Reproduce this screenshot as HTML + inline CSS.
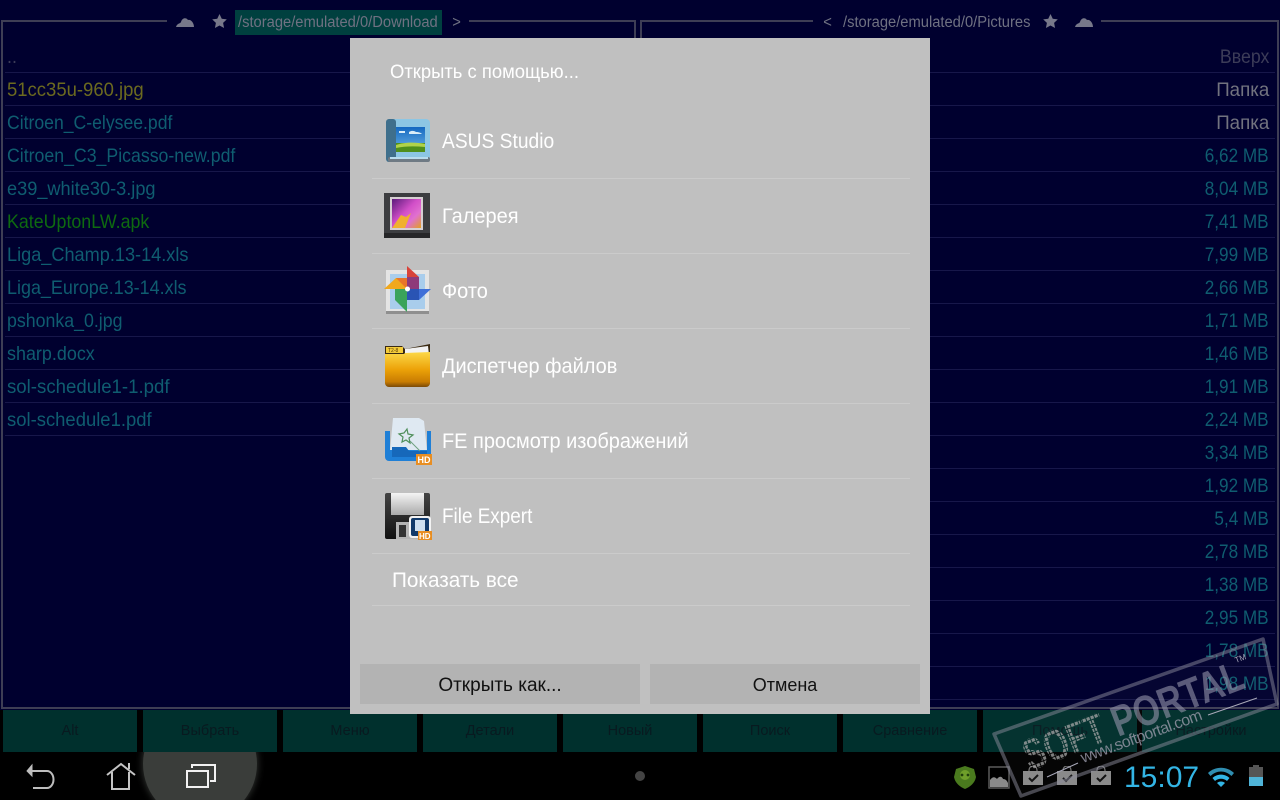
<!DOCTYPE html>
<html><head><meta charset="utf-8"><style>
html,body{margin:0;padding:0;background:#000}
#s{position:relative;width:1280px;height:800px;overflow:hidden;background:#000;font-family:"Liberation Sans",sans-serif}
#s div,#s span{position:absolute;white-space:nowrap}
.panel{background:#00002f}
.ln{background:#3e3e55}
.sep{height:1px;background:#17174a}
.l{left:7px;font-size:19.5px;line-height:22px;color:#0f5d70;transform-origin:0 50%;transform:scaleX(.92)}
.r{right:11px;font-size:19.5px;line-height:22px;color:#0f5d70;transform-origin:100% 50%;transform:scaleX(.88)}
.p{font-size:15.5px;line-height:20px;color:#6f7182;transform:scaleX(.95)}
.b{top:710px;height:42px;background:#00302d;color:#081a20;font-size:14.5px;line-height:43px;text-align:center}
.it{left:442px;font-size:21px;line-height:26px;color:#fff;transform-origin:0 50%;transform:scaleX(.95)}
.dv{left:372px;width:538px;height:1px;background:#cbcbcb}
.db{top:664px;height:40px;background:#b3b3b3;color:#111;line-height:42px;text-align:center}
</style></head><body><div id="s">
<div class="panel" style="left:0;top:0;width:1280px;height:710px"></div>
<div class="ln" style="left:2px;top:20px;width:165px;height:2px"></div>
<div class="ln" style="left:469px;top:20px;width:167px;height:2px"></div>
<div class="ln" style="left:642px;top:20px;width:171px;height:2px"></div>
<div class="ln" style="left:1101px;top:20px;width:176px;height:2px"></div>
<div class="ln" style="left:1px;top:20px;width:2px;height:689px"></div>
<div class="ln" style="left:634px;top:20px;width:2px;height:689px"></div>
<div class="ln" style="left:640px;top:20px;width:2px;height:689px"></div>
<div class="ln" style="left:1277px;top:20px;width:2px;height:689px"></div>
<div class="ln" style="left:1px;top:707px;width:635px;height:2px"></div>
<div class="ln" style="left:640px;top:707px;width:639px;height:2px"></div>

<svg style="position:absolute;left:176px;top:15px" width="18" height="13" viewBox="0 0 18 13"><path d="M0 12C1 8 4 9 5 7 6 3 10 2 12 5 15 4 18 8 18 12Z" fill="#77788a"/></svg>
<svg style="position:absolute;left:212px;top:14px" width="15" height="14" viewBox="0 0 24 23"><path d="M12 0l3.700 7.800 8.300 1-6.100 5.800 1.600 8.400L12 18.900 4.500 23l1.600-8.400L0 8.800l8.300-1z" fill="#77788a"/></svg>
<div style="left:235px;top:10px;width:207px;height:25px;background:#00403f"></div>
<span class="p" style="left:238px;top:13px;transform-origin:0 50%">/storage/emulated/0/Download</span>
<span class="p" style="left:452px;top:13px">&gt;</span>
<span class="p" style="left:823px;top:13px">&lt;</span>
<span class="p" style="left:843px;top:13px;transform-origin:0 50%">/storage/emulated/0/Pictures</span>
<svg style="position:absolute;left:1043px;top:14px" width="15" height="14" viewBox="0 0 24 23"><path d="M12 0l3.700 7.800 8.300 1-6.100 5.800 1.600 8.400L12 18.900 4.500 23l1.600-8.400L0 8.800l8.300-1z" fill="#77788a"/></svg>
<svg style="position:absolute;left:1075px;top:15px" width="18" height="13" viewBox="0 0 18 13"><path d="M0 12C1 8 4 9 5 7 6 3 10 2 12 5 15 4 18 8 18 12Z" fill="#77788a"/></svg>

<div class="sep" style="left:5px;width:630px;top:72px"></div><div class="sep" style="left:5px;width:630px;top:105px"></div><div class="sep" style="left:5px;width:630px;top:138px"></div><div class="sep" style="left:5px;width:630px;top:171px"></div><div class="sep" style="left:5px;width:630px;top:204px"></div><div class="sep" style="left:5px;width:630px;top:237px"></div><div class="sep" style="left:5px;width:630px;top:270px"></div><div class="sep" style="left:5px;width:630px;top:303px"></div><div class="sep" style="left:5px;width:630px;top:336px"></div><div class="sep" style="left:5px;width:630px;top:369px"></div><div class="sep" style="left:5px;width:630px;top:402px"></div><div class="sep" style="left:5px;width:630px;top:435px"></div>

<div class="sep" style="left:930px;width:345px;top:72px"></div><div class="sep" style="left:930px;width:345px;top:105px"></div><div class="sep" style="left:930px;width:345px;top:138px"></div><div class="sep" style="left:930px;width:345px;top:171px"></div><div class="sep" style="left:930px;width:345px;top:204px"></div><div class="sep" style="left:930px;width:345px;top:237px"></div><div class="sep" style="left:930px;width:345px;top:270px"></div><div class="sep" style="left:930px;width:345px;top:303px"></div><div class="sep" style="left:930px;width:345px;top:336px"></div><div class="sep" style="left:930px;width:345px;top:369px"></div><div class="sep" style="left:930px;width:345px;top:402px"></div><div class="sep" style="left:930px;width:345px;top:435px"></div><div class="sep" style="left:930px;width:345px;top:468px"></div><div class="sep" style="left:930px;width:345px;top:501px"></div><div class="sep" style="left:930px;width:345px;top:534px"></div><div class="sep" style="left:930px;width:345px;top:567px"></div><div class="sep" style="left:930px;width:345px;top:600px"></div><div class="sep" style="left:930px;width:345px;top:633px"></div><div class="sep" style="left:930px;width:345px;top:666px"></div><div class="sep" style="left:930px;width:345px;top:699px"></div>

<span class="l" style="top:46px;color:#3c3c58">..</span>
<span class="l" style="top:79px;color:#6c6a1f;transform:scaleX(.948)">51cc35u-960.jpg</span>
<span class="l" style="top:112px;transform:scaleX(.903)">Citroen_C-elysee.pdf</span>
<span class="l" style="top:145px;transform:scaleX(.908)">Citroen_C3_Picasso-new.pdf</span>
<span class="l" style="top:178px;transform:scaleX(.932)">e39_white30-3.jpg</span>
<span class="l" style="top:211px;color:#0e6a10;transform:scaleX(.914)">KateUptonLW.apk</span>
<span class="l" style="top:244px;transform:scaleX(.93)">Liga_Champ.13-14.xls</span>
<span class="l" style="top:277px;transform:scaleX(.92)">Liga_Europe.13-14.xls</span>
<span class="l" style="top:310px;transform:scaleX(.91)">pshonka_0.jpg</span>
<span class="l" style="top:343px">sharp.docx</span>
<span class="l" style="top:376px;transform:scaleX(.955)">sol-schedule1-1.pdf</span>
<span class="l" style="top:409px;transform:scaleX(.946)">sol-schedule1.pdf</span>

<span class="r" style="top:46px;color:#3c3c58;transform:scaleX(.91)">Вверх</span>
<span class="r" style="top:79px;color:#72737f;transform:scaleX(.96)">Папка</span>
<span class="r" style="top:112px;color:#72737f;transform:scaleX(.96)">Папка</span>
<span class="r" style="top:145px">6,62 MB</span>
<span class="r" style="top:178px">8,04 MB</span>
<span class="r" style="top:211px">7,41 MB</span>
<span class="r" style="top:244px">7,99 MB</span>
<span class="r" style="top:277px">2,66 MB</span>
<span class="r" style="top:310px">1,71 MB</span>
<span class="r" style="top:343px">1,46 MB</span>
<span class="r" style="top:376px">1,91 MB</span>
<span class="r" style="top:409px">2,24 MB</span>
<span class="r" style="top:442px">3,34 MB</span>
<span class="r" style="top:475px">1,92 MB</span>
<span class="r" style="top:508px">5,4 MB</span>
<span class="r" style="top:541px">2,78 MB</span>
<span class="r" style="top:574px">1,38 MB</span>
<span class="r" style="top:607px">2,95 MB</span>
<span class="r" style="top:640px">1,78 MB</span>
<span class="r" style="top:673px">1,98 MB</span>

<div class="b" style="left:3px;width:134px">Alt</div>
<div class="b" style="left:143px;width:134px">Выбрать</div>
<div class="b" style="left:283px;width:134px">Меню</div>
<div class="b" style="left:423px;width:134px">Детали</div>
<div class="b" style="left:563px;width:134px">Новый</div>
<div class="b" style="left:703px;width:134px">Поиск</div>
<div class="b" style="left:843px;width:134px">Сравнение</div>
<div class="b" style="left:983px;width:154px">Помощь</div>
<div class="b" style="left:1142px;width:138px">Настройки</div>

<!-- dialog -->
<div style="left:350px;top:38px;width:580px;height:676px;background:#c0c0c0"></div>
<span style="left:390px;top:61px;font-size:19px;line-height:24px;color:#fff;transform-origin:0 50%;transform:scaleX(.97)">Открыть с помощью...</span>

<svg style="position:absolute;left:385px;top:118px" width="46" height="46" viewBox="0 0 46 46">
<defs><linearGradient id="sky" x1="0" y1="0" x2="0" y2="1"><stop offset="0" stop-color="#1468c0"/><stop offset="1" stop-color="#6cb4e8"/></linearGradient></defs>
<rect x="1" y="1" width="44" height="43" rx="4" fill="#8cc6e4"/><rect x="1" y="1" width="10" height="43" rx="3" fill="#3f6f8c"/><rect x="3" y="39" width="42" height="5" rx="2" fill="#6f7a84"/><rect x="5" y="39" width="38" height="2" fill="#b8dcee"/>
<rect x="11" y="9" width="29" height="25" fill="url(#sky)"/><path d="M24 14c3-2 6-1 7 0 3 0 5 1 6 2H24zM14 13h6v2h-6z" fill="#d8ecf8"/><rect x="11" y="25" width="29" height="9" fill="#4f8f1c"/><path d="M11 27c8-3 20-3 29-1v3c-10-1-20-1-29 1z" fill="#b0d24a"/>
</svg>
<svg style="position:absolute;left:384px;top:193px" width="46" height="45" viewBox="0 0 46 45">
<defs><linearGradient id="g1" x1="0" y1="0" x2="1" y2="1"><stop offset="0" stop-color="#5a1a7a"/><stop offset=".45" stop-color="#d24fc8"/><stop offset=".7" stop-color="#e070d0"/><stop offset="1" stop-color="#e2a020"/></linearGradient></defs>
<rect width="46" height="45" fill="#3c3d40"/><rect y="40" width="46" height="5" fill="#262628"/><rect x="6" y="4" width="33" height="33" fill="#d6cfd2"/><rect x="8" y="6" width="29" height="29" fill="url(#g1)"/><path d="M8 35l9-13 5 2 5-4-6 15z" fill="#f0b030"/></svg>
<svg style="position:absolute;left:384px;top:265px" width="48" height="50" viewBox="0 0 48 50">
<rect x="2" y="5" width="43" height="43" fill="#e4e4e4"/><rect x="2" y="46" width="43" height="3" fill="#8f8f8f"/><rect x="6" y="9" width="35" height="35" fill="#a9cdec"/>
<path d="M23 24V1L35 12V24Z" fill="#d8433a"/><path d="M23 24V12H35V24Z" fill="#8e3a7a"/><path d="M23 24H0L12 13H23Z" fill="#f0a81e"/><path d="M23 24V13H12Z" fill="#e8752a"/><path d="M23 24V47L11 35V24Z" fill="#3aa35a"/><path d="M23 24H47L35 35H23Z" fill="#3f6fd8"/><path d="M23 24H35V35H23Z" fill="#2a54b4"/><circle cx="23.500" cy="24" r="2.500" fill="#fff"/></svg>
<svg style="position:absolute;left:384px;top:343px" width="47" height="45" viewBox="0 0 47 45">
<defs><linearGradient id="g2" x1="0" y1="0" x2="0" y2="1"><stop offset="0" stop-color="#fcd848"/><stop offset=".5" stop-color="#eca208"/><stop offset=".85" stop-color="#c87c02"/><stop offset="1" stop-color="#7a4a08"/></linearGradient></defs>
<path d="M1 3h17l3 3 25-5v38a4 4 0 0 1-4 4H5a4 4 0 0 1-4-4z" fill="#3a2a12"/><path d="M21 6L44 3l1 9H21z" fill="#f2f2f2"/><path d="M2 4h17v6H2z" fill="#f4cc3a"/><path d="M1 11h19l1-1 25-1v31a4 4 0 0 1-4 4H5a4 4 0 0 1-4-4z" fill="url(#g2)"/><text x="4" y="9" font-size="5" fill="#5a3a06" font-family="Liberation Sans,sans-serif">T2-8</text></svg>
<svg style="position:absolute;left:384px;top:417px" width="49" height="49" viewBox="0 0 49 49">
<path d="M9 1h26l5 3 3 30H6z" fill="#dfe9f2"/><path d="M1 14h5v19h37V14h4v26a4 4 0 0 1-4 4H5a4 4 0 0 1-4-4z" fill="#1f7fd6"/><path d="M8 30h14l3 4h18v6H8z" fill="#1668ba"/><path d="M20 16l3-4 1 5 5 1-4 3 1 5-4-3-4 2 1-5-4-3z" fill="none" stroke="#4f8f5a" stroke-width="1.200"/><path d="M26 24l10 10" stroke="#6ea080" stroke-width="1"/><rect x="32" y="37" width="16" height="11" fill="#e88e22"/><text x="33.500" y="46" font-size="9" font-weight="700" fill="#fff" font-family="Liberation Sans,sans-serif">HD</text></svg>
<svg style="position:absolute;left:384px;top:492px" width="49" height="49" viewBox="0 0 49 49">
<defs><linearGradient id="g3" x1="0" y1="0" x2="0" y2="1"><stop offset="0" stop-color="#444"/><stop offset="1" stop-color="#111"/></linearGradient><linearGradient id="g4" x1="0" y1="0" x2="0" y2="1"><stop offset="0" stop-color="#f4f4f4"/><stop offset="1" stop-color="#aaa"/></linearGradient></defs>
<rect x="1" y="1" width="45" height="46" rx="2" fill="url(#g3)"/><rect x="7" y="1" width="33" height="22" fill="url(#g4)"/><rect x="12" y="30" width="22" height="17" fill="#b4b4b4"/><rect x="15" y="33" width="7" height="12" fill="#333"/>
<rect x="25" y="24" width="22" height="22" rx="3" fill="#f2f2f2"/><rect x="27" y="26" width="18" height="18" rx="2" fill="#123a6a"/><rect x="31" y="28" width="10" height="11" fill="#cfe0f0"/><rect x="34" y="39" width="14" height="9" fill="#e88e22"/><text x="35" y="47" font-size="8" font-weight="700" fill="#fff" font-family="Liberation Sans,sans-serif">HD</text></svg>

<span class="it" style="top:129px;transform:scaleX(.915)">ASUS Studio</span>
<span class="it" style="top:204px">Галерея</span>
<span class="it" style="top:279px">Фото</span>
<span class="it" style="top:354px">Диспетчер файлов</span>
<span class="it" style="top:429px">FE просмотр изображений</span>
<span class="it" style="top:504px;transform:scaleX(.90)">File Expert</span>
<span class="it" style="top:568px;left:392px;transform:scaleX(.987)">Показать все</span>
<div class="dv" style="top:178px"></div><div class="dv" style="top:253px"></div><div class="dv" style="top:328px"></div><div class="dv" style="top:403px"></div><div class="dv" style="top:478px"></div><div class="dv" style="top:553px"></div><div class="dv" style="top:605px"></div>
<div class="db" style="left:360px;width:280px;font-size:19px;line-height:43px">Открыть как...</div>
<div class="db" style="left:650px;width:270px;font-size:18px">Отмена</div>

<!-- nav -->
<div style="left:0;top:752px;width:1280px;height:48px;background:#000;overflow:hidden">
<div style="left:143px;top:-45px;width:114px;height:114px;border-radius:50%;background:#3a3d3a;box-shadow:0 0 8px #3a3d3a"></div>
</div>
<svg style="position:absolute;left:20px;top:760px" width="40" height="34" viewBox="0 0 40 34" fill="none"><path d="M12 11H27a6.500 8.500 0 0 1 0 17H13" stroke="#bdbdbd" stroke-width="2"/><path d="M12 5V16L7 11Z" fill="#bdbdbd" stroke="#bdbdbd"/></svg>
<svg style="position:absolute;left:105px;top:762px" width="32" height="30" viewBox="0 0 32 30" fill="none" stroke="#c4c4c4" stroke-width="2"><path d="M2 13L16 2 30 13M7 10V27H24V10M24 1V7"/></svg>
<svg style="position:absolute;left:185px;top:762px" width="32" height="28" viewBox="0 0 32 28" fill="none" stroke="#f2f2f2" stroke-width="2"><rect x="2" y="9" width="21" height="16"/><path d="M7 6V3H30V19H25"/></svg>
<div style="left:635px;top:771px;width:10px;height:10px;border-radius:50%;background:#444"></div>

<svg style="position:absolute;left:953px;top:765px" width="24" height="25" viewBox="0 0 24 25"><path d="M12 1l9 3 2 8c-1 6-6 10-11 12C7 22 2 18 1 12l2-8z" fill="#4a7a1e"/><circle cx="12" cy="10" r="5" fill="#6f9f2a"/><circle cx="9" cy="10" r="1.400" fill="#20400c"/><circle cx="15" cy="10" r="1.400" fill="#20400c"/></svg>
<svg style="position:absolute;left:988px;top:766px" width="22" height="23" viewBox="0 0 22 23"><rect x="1" y="1" width="20" height="21" fill="none" stroke="#5a5a5a" stroke-width="1.500"/><path d="M2 21v-7c3-4 5-3 7-1 2-3 5-3 6 0 3 0 4 2 5 4v4z" fill="#8a8a8a"/></svg>
<svg style="position:absolute;left:1023px;top:766px" width="20" height="20" viewBox="0 0 20 20"><path d="M6 6V4a4 4 0 0 1 8 0v2" fill="none" stroke="#777" stroke-width="1.200"/><rect y="5" width="20" height="14" fill="#8a8a8a"/><path d="M6 12l3 3 6-6" stroke="#111" stroke-width="2" fill="none"/></svg>
<svg style="position:absolute;left:1057px;top:766px" width="20" height="20" viewBox="0 0 20 20"><path d="M6 6V4a4 4 0 0 1 8 0v2" fill="none" stroke="#777" stroke-width="1.200"/><rect y="5" width="20" height="14" fill="#8a8a8a"/><path d="M6 12l3 3 6-6" stroke="#111" stroke-width="2" fill="none"/></svg>
<svg style="position:absolute;left:1091px;top:766px" width="20" height="20" viewBox="0 0 20 20"><path d="M6 6V4a4 4 0 0 1 8 0v2" fill="none" stroke="#777" stroke-width="1.200"/><rect y="5" width="20" height="14" fill="#8a8a8a"/><path d="M6 12l3 3 6-6" stroke="#111" stroke-width="2" fill="none"/></svg>
<span style="left:1124px;top:760px;font-size:30px;line-height:36px;color:#33b5e5">15:07</span>
<svg style="position:absolute;left:1208px;top:767px" width="26" height="20" viewBox="0 0 26 20"><path d="M0 6C7-1 19-1 26 6l-2.500 3C17 3 9 3 2.500 9z" fill="#2f8db0"/><path d="M4.500 11C9 6.500 17 6.500 21.500 11L19 14c-3-3-9-3-12 0z" fill="#33b5e5"/><path d="M9 16c2-2 6-2 8 0l-4 4z" fill="#33b5e5"/></svg>
<svg style="position:absolute;left:1249px;top:765px" width="14" height="21" viewBox="0 0 14 21"><rect x="4" y="0" width="6" height="3" fill="#555"/><rect y="2" width="14" height="11" fill="#555"/><rect y="12" width="14" height="9" fill="#4fb4d8"/></svg>

<!-- watermark -->
<svg style="position:absolute;left:0;top:0" width="1280" height="800" viewBox="0 0 1280 800">
<defs><pattern id="dots" width="4.200" height="4.200" patternUnits="userSpaceOnUse"><rect width="3.200" height="3.200" fill="#a8a8a8"/></pattern></defs>
<path d="M994 734L1263 639 1277 704 1021 796Z" fill="rgba(150,150,170,.03)" stroke="#8b8b9b" stroke-opacity=".5" stroke-width="3.500" stroke-linejoin="round"/>
<g font-family="Liberation Sans,sans-serif">
<text transform="translate(1030,771) rotate(-21)" font-size="44" font-weight="700" fill="url(#dots)" opacity=".75" textLength="85" lengthAdjust="spacingAndGlyphs">SOFT</text>
<text transform="translate(1118,737) rotate(-21)" font-size="43" font-weight="700" fill="#9494aa" fill-opacity=".6" textLength="138" lengthAdjust="spacingAndGlyphs">PORTAL</text>
<text transform="translate(1236,663) rotate(-21)" font-size="8" fill="#a8a8b8">TM</text>
<text transform="translate(1083,763) rotate(-20)" font-size="16" fill="#9a9aaa" fill-opacity=".8" textLength="128">www.softportal.com</text>
</g>
<path d="M1047 777L1078 763M1208 715L1257 698" stroke="#a8a8b8" stroke-width="1"/>
</svg>
</div></body></html>
